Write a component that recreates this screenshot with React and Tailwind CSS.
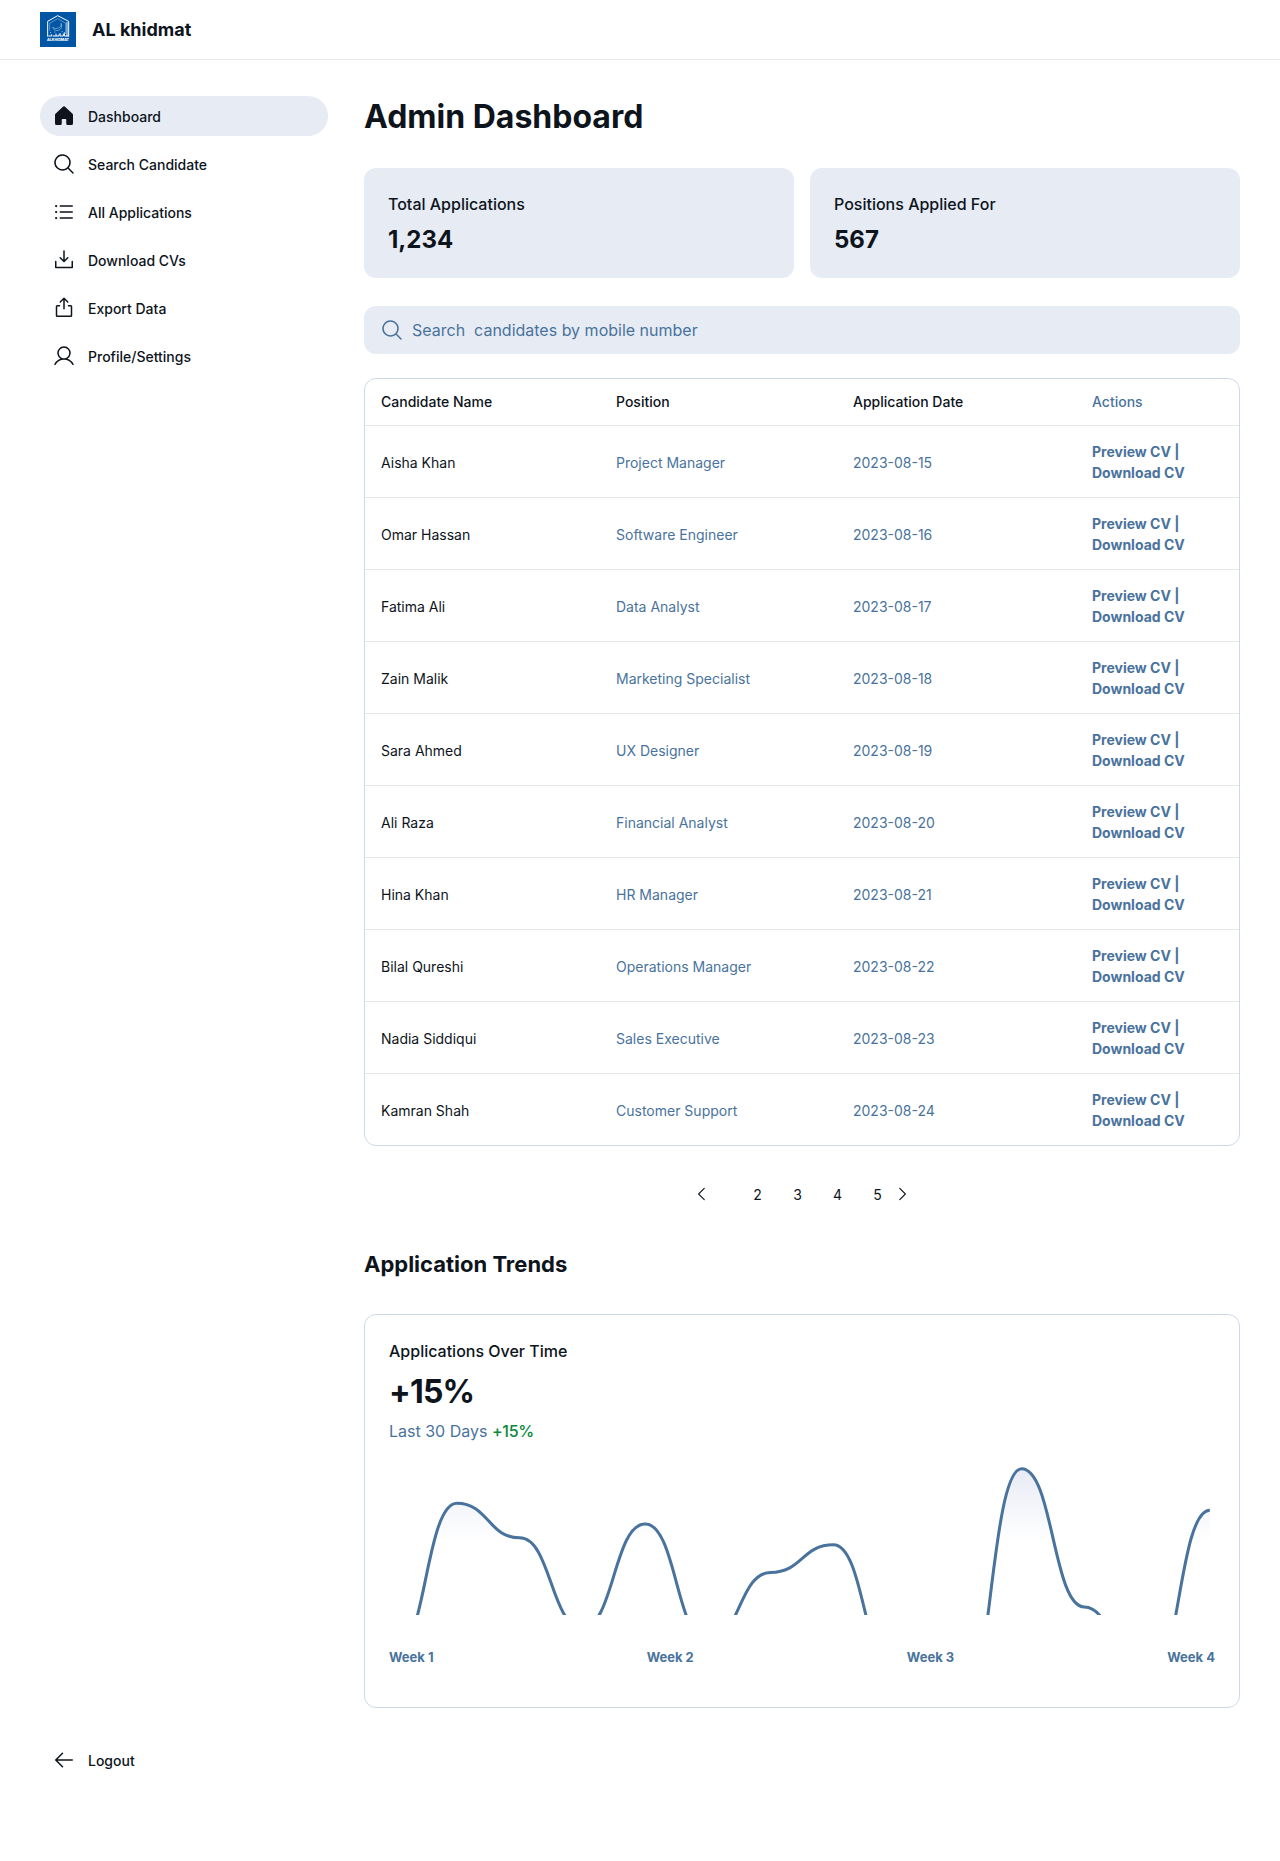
import React from "react";
import {
  PiMagnifyingGlass,
  PiListBullets,
  PiDownloadSimple,
  PiExport,
  PiUser,
  PiArrowLeft,
  PiCaretLeft,
  PiCaretRight,
} from "react-icons/pi";

function HouseIcon({ size = 24 }) {
  return (
    <svg width={size} height={size} viewBox="0 0 256 256" fill="currentColor">
      <path d="M224,115.55V208a16,16,0,0,1-16,16H168a16,16,0,0,1-16-16V168a8,8,0,0,0-8-8H112a8,8,0,0,0-8,8v40a16,16,0,0,1-16,16H48a16,16,0,0,1-16-16V115.55a16,16,0,0,1,5.17-11.78l80-75.48.11-.11a16,16,0,0,1,21.53,0,1.14,1.14,0,0,0,.11.11l80,75.48A16,16,0,0,1,224,115.55Z" />
    </svg>
  );
}

function Logo() {
  return (
    <svg width="36" height="35" viewBox="0 0 108 105" className="shrink-0">
      <rect width="108" height="105" fill="#0155a5" />
      <g fill="none" stroke="#fff">
        <path d="M23 74V28L53 11L86 28V74" strokeWidth="3" />
        <path d="M29 56V34L53 20L77 34V66" strokeWidth="1.5" opacity="0.7" />
        <path d="M81 30V73" strokeWidth="4" opacity="0.7" />
        <path d="M63 34A14 14 0 1 1 38 46A15 12 0 0 0 63 34Z" strokeWidth="1.2" />
        <path d="M25 72H35V67M38 72H48V65M48 72H57V67M60 72V63M60 72H70V65M73 72V61M73 72H86" strokeWidth="3" />
        <path d="M30 62H33M43 60H46M65 59H68" strokeWidth="2" />
      </g>
      <text
        x="54"
        y="87"
        textAnchor="middle"
        textLength="66"
        lengthAdjust="spacingAndGlyphs"
        fill="#fff"
        fontFamily="Inter, sans-serif"
        fontWeight="800"
        fontSize="10"
      >
        ALKHIDMAT
      </text>
    </svg>
  );
}

const navItems = [
  { label: "Dashboard", Icon: HouseIcon, active: true },
  { label: "Search Candidate", Icon: PiMagnifyingGlass },
  { label: "All Applications", Icon: PiListBullets },
  { label: "Download CVs", Icon: PiDownloadSimple },
  { label: "Export Data", Icon: PiExport },
  { label: "Profile/Settings", Icon: PiUser },
];

const candidates = [
  ["Aisha Khan", "Project Manager", "2023-08-15"],
  ["Omar Hassan", "Software Engineer", "2023-08-16"],
  ["Fatima Ali", "Data Analyst", "2023-08-17"],
  ["Zain Malik", "Marketing Specialist", "2023-08-18"],
  ["Sara Ahmed", "UX Designer", "2023-08-19"],
  ["Ali Raza", "Financial Analyst", "2023-08-20"],
  ["Hina Khan", "HR Manager", "2023-08-21"],
  ["Bilal Qureshi", "Operations Manager", "2023-08-22"],
  ["Nadia Siddiqui", "Sales Executive", "2023-08-23"],
  ["Kamran Shah", "Customer Support", "2023-08-24"],
];

const trendLine =
  "M0 109C18.1538 109 18.1538 21 36.3077 21C54.4615 21 54.4615 41 72.6154 41C90.7692 41 90.7692 93 108.923 93C127.077 93 127.077 33 145.231 33C163.385 33 163.385 101 181.538 101C199.692 101 199.692 61 217.846 61C236 61 236 45 254.154 45C272.308 45 272.308 121 290.462 121C308.615 121 308.615 149 326.769 149C344.923 149 344.923 1 363.077 1C381.231 1 381.231 81 399.385 81C417.538 81 417.538 129 435.692 129C453.846 129 453.846 25 472 25";

function NavItem({ label, Icon, active }) {
  return (
    <a className={`flex h-10 items-center gap-3 rounded-full px-3 ${active ? "bg-[#e7ebf4]" : ""}`}>
      <Icon size={24} />
      <span className="text-sm font-medium leading-[21px]">{label}</span>
    </a>
  );
}

function StatCard({ label, value }) {
  return (
    <div className="flex h-[110px] flex-col gap-[9px] rounded-xl bg-[#e7ebf4] p-6">
      <p className="text-base font-medium leading-6">{label}</p>
      <p className="text-2xl font-bold leading-[30px]">{value}</p>
    </div>
  );
}

function CandidateTable() {
  const cols = "grid grid-cols-[235px_237px_239px_163px] items-center";
  return (
    <div className="mt-6 overflow-hidden rounded-xl border border-[#cedae8] text-sm leading-[21px]">
      <div className={`${cols} h-[46px] pb-px font-medium`}>
        <span className="px-4">Candidate Name</span>
        <span className="px-4">Position</span>
        <span className="px-4">Application Date</span>
        <span className="px-4 text-[#49739c]">Actions</span>
      </div>
      {candidates.map(([name, position, date]) => (
        <div key={name} className={`${cols} h-[72px] border-t border-[#e5e8eb] text-[#49739c]`}>
          <span className="px-4 pt-px text-[#0d141c]">{name}</span>
          <span className="px-4 pt-px">{position}</span>
          <span className="px-4 pt-px">{date}</span>
          <span className="px-4 font-bold">
            Preview CV |<br />
            Download CV
          </span>
        </div>
      ))}
    </div>
  );
}

function Pagination() {
  return (
    <div className="mt-7 flex h-10 items-center pl-[328.5px] text-sm leading-[21px]">
      <PiCaretLeft size={18} className="mr-[27px]" />
      {[2, 3, 4, 5].map((n) => (
        <span key={n} className="flex size-10 items-center justify-center">
          {n}
        </span>
      ))}
      <PiCaretRight size={18} className="-ml-[5px]" />
    </div>
  );
}

function TrendCard() {
  return (
    <div className="mt-[35px] flex h-[394px] flex-col rounded-xl border border-[#cedae8] p-6">
      <p className="text-base font-medium leading-6">Applications Over Time</p>
      <p className="mt-[9px] text-[32px] font-bold leading-10 tracking-[-0.8px]">+15%</p>
      <p className="mt-[7px] text-base leading-6 text-[#49739c]">
        Last 30 Days <span className="font-medium tracking-[-0.3px] text-[#07883b]">+15%</span>
      </p>
      <svg
        className="mt-6 h-[148px] w-full shrink-0"
        viewBox="-3 0 478 150"
        preserveAspectRatio="xMidYMin slice"
        fill="none"
      >
        <defs>
          <linearGradient id="trendFill" x1="236" y1="1" x2="236" y2="43" gradientUnits="userSpaceOnUse">
            <stop stopColor="#e7ebf4" />
            <stop offset="1" stopColor="#e7ebf4" stopOpacity="0" />
          </linearGradient>
        </defs>
        <path d={`${trendLine}V149H0V109Z`} fill="url(#trendFill)" />
        <path d={trendLine} stroke="#49739c" strokeWidth="1.75" />
      </svg>
      <div className="mt-8 flex justify-between text-[13px] font-bold leading-5 text-[#49739c]">
        <span>Week 1</span>
        <span>Week 2</span>
        <span>Week 3</span>
        <span>Week 4</span>
      </div>
    </div>
  );
}

export default function App() {
  return (
    <div className="flex min-h-[1861px] flex-col bg-white font-['Inter',sans-serif] text-[#0d141c]">
      <header className="flex h-[60px] items-center gap-4 border-b border-[#e5e8eb] px-10">
        <Logo />
        <h2 className="text-lg font-bold leading-[23px]">AL khidmat</h2>
      </header>
      <div className="flex flex-1 gap-9 px-10 pt-9">
        <aside className="flex h-[1684px] w-72 shrink-0 flex-col justify-between">
          <nav className="flex flex-col gap-2">
            {navItems.map((item) => (
              <NavItem key={item.label} {...item} />
            ))}
          </nav>
          <NavItem label="Logout" Icon={PiArrowLeft} />
        </aside>
        <main className="flex w-[876px] flex-col">
          <h1 className="mt-px text-[32px] font-bold leading-10">Admin Dashboard</h1>
          <div className="mt-[31px] grid grid-cols-2 gap-4">
            <StatCard label="Total Applications" value="1,234" />
            <StatCard label="Positions Applied For" value="567" />
          </div>
          <div className="mt-7 flex h-12 items-center gap-2 rounded-xl bg-[#e7ebf4] pl-4 text-[#49739c]">
            <PiMagnifyingGlass size={24} />
            <span className="whitespace-pre text-base">{"Search  candidates by mobile number"}</span>
          </div>
          <CandidateTable />
          <Pagination />
          <h2 className="mt-[35px] text-[22px] font-bold leading-[30px]">Application Trends</h2>
          <TrendCard />
        </main>
      </div>
    </div>
  );
}
